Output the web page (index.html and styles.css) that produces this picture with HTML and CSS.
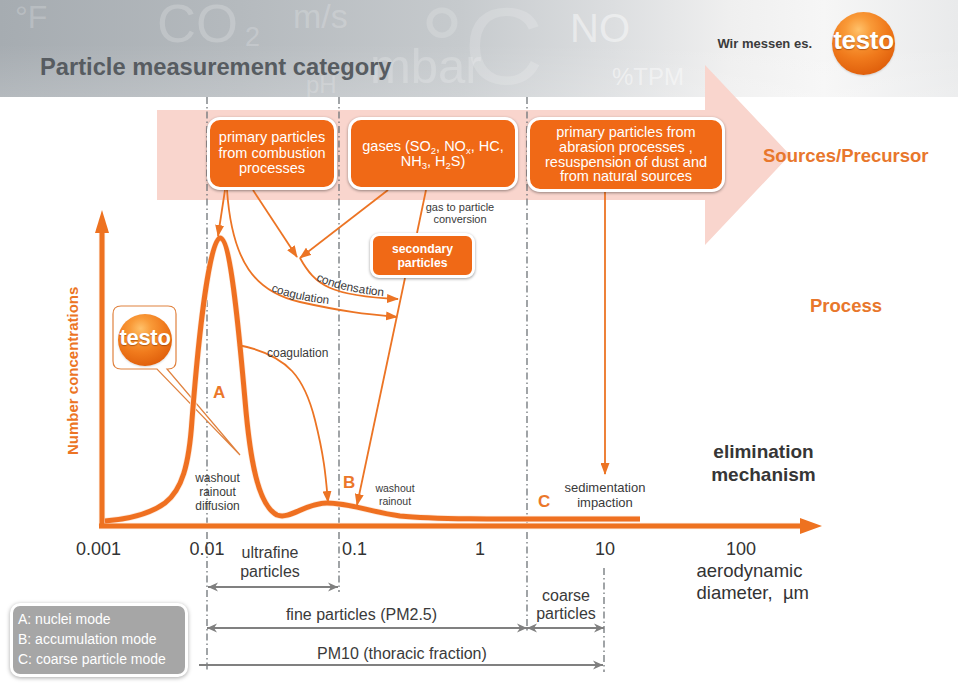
FILE: index.html
```html
<!DOCTYPE html>
<html lang="en">
<head>
<meta charset="utf-8">
<title>Particle measurement category</title>
<link rel="stylesheet" href="styles.css">
</head>
<body>
<div class="slide">
  <header class="hdr">
    <span class="wm wm-f" aria-hidden="true">°F</span>
    <span class="wm wm-co" aria-hidden="true">CO</span>
    <span class="wm wm-2" aria-hidden="true">2</span>
    <span class="wm wm-ms" aria-hidden="true">m/s</span>
    <span class="wm wm-mbar" aria-hidden="true">mbar</span>
    <span class="wm wm-c" aria-hidden="true">°C</span>
    <span class="wm wm-no" aria-hidden="true">NO</span>
    <span class="wm wm-ph" aria-hidden="true">pH</span>
    <span class="wm wm-tpm" aria-hidden="true">%TPM</span>
    <h1 class="title">Particle measurement category</h1>
    <div class="brand">
      <span class="slogan">Wir messen es.</span>
      <div class="ball">testo</div>
    </div>
  </header>

  <div class="canvas">
    <svg class="art" viewBox="0 0 958 687" width="958" height="687">
      <defs>
        <marker id="oa" viewBox="0 0 12 9" refX="11" refY="4.5" markerWidth="12" markerHeight="9" markerUnits="userSpaceOnUse" orient="auto">
          <path d="M0,0 L12,4.5 L0,9 Z" fill="#ec7424"/>
        </marker>
        <marker id="ga" viewBox="0 0 10 10" refX="10" refY="5" markerWidth="10" markerHeight="10" markerUnits="userSpaceOnUse" orient="auto-start-reverse">
          <path d="M0,0.5 L10,5 L0,9.5 L3,5 Z" fill="#7f7f7f"/>
        </marker>
        <path id="tp-cond" d="M316,280 Q338,292 392,297"/>
        <path id="tp-coag" d="M271,291 Q300,302 338,305"/>
      </defs>

      <path class="pink" d="M157,110 H705 V65 L790,155 L705,245 V200 H157 Z"/>

      <g class="dd">
        <line x1="207" y1="97" x2="207" y2="672"/>
        <line x1="339" y1="97" x2="339" y2="592"/>
        <line x1="527" y1="97" x2="527" y2="633"/>
        <line x1="604" y1="568" x2="604" y2="672"/>
      </g>

      <path class="bubble" d="M121,306 H168 Q176,306 176,314 V361 Q176,369 168,369 H167 L240,455 L157,369 H121 Q113,369 113,361 V314 Q113,306 121,306 Z"/>

      <g class="halo">
        <path d="M102,526 V228"/>
        <path d="M99,526 H802"/>
        <path d="M105,521 C130,519 150,514 165,503 C182,490 189,465 192,420 C199,330 210,238 220,238 C230,238 238,320 245,400 C250,460 258,505 277,515 C290,520 305,503 327,503 C350,503 370,512 400,516 C440,520 520,519 640,519"/>
      </g>
      <g class="axis">
        <path d="M102,526 V228"/>
        <path d="M99,526 H802"/>
      </g>
      <polygon class="axhead" points="102,210 95,233 109,233"/>
      <polygon class="axhead" points="822,526 800,518 800,534"/>
      <path class="curve" d="M105,521 C130,519 150,514 165,503 C182,490 189,465 192,420 C199,330 210,238 220,238 C230,238 238,320 245,400 C250,460 258,505 277,515 C290,520 305,503 327,503 C350,503 370,512 400,516 C440,520 520,519 640,519"/>

      <g class="pa">
        <path d="M225,190 L218,236"/>
        <path d="M253,190 L297,257"/>
        <path d="M388,190 L300,258"/>
        <path d="M300,258 C315,285 330,296 398,299"/>
        <path d="M227,190 C232,262 255,292 300,302 S365,314 397,317"/>
        <path class="nomark" d="M426,190 L417,233"/>
        <path d="M405,278 L357,505"/>
        <path d="M238,345 C290,355 305,380 315,420 S326,480 328,502"/>
        <path d="M605,192 L605,474"/>
      </g>

      <g class="dim">
        <path class="both" d="M208,587 H338"/>
        <path class="both" d="M207,628 H527"/>
        <path class="both" d="M527,628 H604"/>
        <path class="end" d="M199,665 H603"/>
      </g>

      <text class="t-side" x="763" y="161.5">Sources/Precursor</text>
      <text class="t-side" x="810" y="311.5">Process</text>
      <text class="t-yaxis" transform="translate(78,455) rotate(-90)">Number concentrations</text>

      <text class="t-mode" x="213" y="398">A</text>
      <text class="t-mode" x="343" y="488">B</text>
      <text class="t-mode" x="538" y="507">C</text>

      <text class="t-proc t-12 mid" x="217.5" y="482">washout</text>
      <text class="t-proc t-12 mid" x="217.5" y="496">rainout</text>
      <text class="t-proc t-12 mid" x="217.5" y="509.5">diffusion</text>

      <text class="t-proc t-105 mid" x="395" y="491.5">washout</text>
      <text class="t-proc t-105 mid" x="395" y="505">rainout</text>

      <text class="t-proc t-13 mid" x="605" y="492">sedimentation</text>
      <text class="t-proc t-13 mid" x="605" y="507">impaction</text>

      <text class="t-elim mid" x="763.5" y="458">elimination</text>
      <text class="t-elim mid" x="763.5" y="481">mechanism</text>

      <text class="t-proc t-11 mid" x="460" y="211">gas to particle</text>
      <text class="t-proc t-11 mid" x="460" y="223.3">conversion</text>

      <text class="t-proc t-12" x="267" y="357">coagulation</text>
      <text class="t-proc t-curv"><textPath href="#tp-cond">condensation</textPath></text>
      <text class="t-proc t-curv2"><textPath href="#tp-coag">coagulation</textPath></text>

      <text class="t-tick mid" x="98.5" y="555">0.001</text>
      <text class="t-tick mid" x="207" y="555">0.01</text>
      <text class="t-tick" x="342" y="555">0.1</text>
      <text class="t-tick mid" x="480" y="555">1</text>
      <text class="t-tick mid" x="605" y="555">10</text>
      <text class="t-tick mid" x="741" y="555">100</text>
      <text class="t-unit" x="696.5" y="577">aerodynamic</text>
      <text class="t-unit" x="696.5" y="599">diameter,  µm</text>

      <text class="t-size mid" x="270" y="557.7">ultrafine</text>
      <text class="t-size mid" x="270" y="576.7">particles</text>
      <text class="t-size mid" x="361.5" y="620">fine particles (PM2.5)</text>
      <text class="t-size mid" x="566" y="601">coarse</text>
      <text class="t-size mid" x="566" y="619">particles</text>
      <text class="t-size" x="317" y="659">PM10 (thoracic fraction)</text>
    </svg>

    <div class="node n1"><span>primary particles<br>from combustion<br>processes</span></div>
    <div class="node n2"><span>gases (SO<sub>2</sub>, NO<sub>x</sub>, HC,<br>NH<sub>3</sub>, H<sub>2</sub>S)</span></div>
    <div class="node n3"><span>primary particles from<br>abrasion processes ,<br>resuspension of dust and<br>from natural sources</span></div>
    <div class="node n4"><span>secondary<br>particles</span></div>

    <div class="ball ball-sm">testo</div>

    <div class="legend">
      <div>A: nuclei mode</div>
      <div>B: accumulation mode</div>
      <div>C: coarse particle mode</div>
    </div>
  </div>
</div>
</body>
</html>
```

FILE: styles.css
```css
* { box-sizing: border-box; }

html, body {
  margin: 0;
  padding: 0;
  background: #ffffff;
}

body {
  font-family: "Liberation Sans", Arial, sans-serif;
}

.slide {
  position: relative;
  width: 958px;
  height: 687px;
  overflow: hidden;
  background: #ffffff;
}

/* ---------- header ---------- */
.hdr {
  position: relative;
  height: 97px;
  display: flex;
  justify-content: space-between;
  align-items: flex-start;
  padding: 0 63px 0 40px;
  overflow: hidden;
  background:
    linear-gradient(180deg, rgba(255,255,255,0) 45%, rgba(255,255,255,0.16) 100%),
    linear-gradient(90deg, #a6acb1 0%, #b5babe 25%, #c6cacd 48%, #dcdee0 64%, #efefef 76%, #f6f6f6 86%, #e9eaeb 100%);
}

.wm {
  position: absolute;
  color: rgba(255, 255, 255, 0.2);
  line-height: 1;
  white-space: nowrap;
  font-family: "Liberation Sans", Arial, sans-serif;
}
.wm-f    { left: 15px;  top: 1px;   font-size: 32px; }
.wm-co   { left: 157px; top: -4px;  font-size: 54px; }
.wm-2    { left: 245px; top: 24px;  font-size: 27px; }
.wm-ms   { left: 293px; top: -1px;  font-size: 34px; }
.wm-mbar { left: 370px; top: 42px;  font-size: 49px; }
.wm-c    { left: 420px; top: -9px;  font-size: 110px; color: rgba(255,255,255,0.17); }
.wm-no   { left: 570px; top: 8px;   font-size: 40px; color: rgba(255,255,255,0.45); }
.wm-ph   { left: 306px; top: 73px;  font-size: 24px; }
.wm-tpm  { left: 612px; top: 65px;  font-size: 24px; color: rgba(255,255,255,0.45); }

.title {
  position: relative;
  margin: 53px 0 0;
  font-size: 23.7px;
  line-height: 28px;
  font-weight: bold;
  color: #575c61;
}

.brand {
  position: relative;
  display: flex;
  align-items: center;
  gap: 20px;
  margin-top: 12px;
}

.slogan {
  font-size: 13px;
  line-height: 15px;
  font-weight: bold;
  color: #3b3b3b;
}

.ball {
  width: 63px;
  height: 63px;
  border-radius: 50%;
  display: flex;
  align-items: center;
  justify-content: center;
  padding-bottom: 7px;
  background: radial-gradient(circle at 42% 28%, #ffc16a 0%, #f99a38 22%, #f07a1c 50%, #e0600c 78%, #c24c08 100%);
  color: #ffffff;
  font-size: 26px;
  font-weight: bold;
  letter-spacing: -0.3px;
  text-shadow: 0 1px 1px rgba(130, 50, 0, 0.55);
  box-shadow: 0 1px 2px rgba(0,0,0,0.15);
}

/* ---------- diagram canvas ---------- */
.canvas {
  position: absolute;
  left: 0;
  top: 0;
  width: 958px;
  height: 687px;
}

.art {
  position: absolute;
  left: 0;
  top: 0;
  font-family: "Liberation Sans", Arial, sans-serif;
}

.pink { fill: #f9d5cd; }

.dd line {
  stroke: #6f7478;
  stroke-width: 1.3;
  stroke-dasharray: 7 3 1.5 3;
}

.bubble {
  fill: #ffffff;
  stroke: #e0823f;
  stroke-width: 1.2;
}

.halo path {
  fill: none;
  stroke: #fde9dc;
  stroke-width: 6.5;
}

.axis path {
  fill: none;
  stroke: #ee7220;
  stroke-width: 5;
}

.axhead { fill: #ee7220; }

.curve {
  fill: none;
  stroke: #ef7021;
  stroke-width: 5;
  stroke-linejoin: round;
}

.pa path {
  fill: none;
  stroke: #ec7424;
  stroke-width: 1.8;
  marker-end: url(#oa);
}
.pa path.nomark { marker-end: none; }

.dim path {
  fill: none;
  stroke: #808080;
  stroke-width: 2;
}
.dim path.both { marker-start: url(#ga); marker-end: url(#ga); }
.dim path.end { marker-end: url(#ga); }

.mid { text-anchor: middle; }

.t-side {
  font-size: 18.5px;
  font-weight: bold;
  fill: #e8772c;
}

.t-yaxis {
  font-size: 15px;
  font-weight: bold;
  fill: #ec7424;
}

.t-mode {
  font-size: 17px;
  font-weight: bold;
  fill: #eb772a;
}

.t-proc { fill: #3a3a3a; }
.t-105 { font-size: 10.5px; }
.t-11 { font-size: 11px; }
.t-12 { font-size: 12px; }
.t-13 { font-size: 13px; }
.t-curv { font-size: 11.8px; }
.t-curv2 { font-size: 11.6px; }

.t-elim {
  font-size: 19px;
  font-weight: bold;
  fill: #363636;
}

.t-tick {
  font-size: 18px;
  fill: #333333;
}

.t-unit {
  font-size: 18.5px;
  fill: #333333;
  white-space: pre;
}

.t-size {
  font-size: 16px;
  fill: #3a3a3a;
}

/* ---------- source boxes ---------- */
.node {
  position: absolute;
  display: flex;
  align-items: center;
  justify-content: center;
  text-align: center;
  background: #f06916;
  color: #ffffff;
  border: 3px solid #ffffff;
  border-radius: 13px;
  box-shadow: 0 1px 3px rgba(0, 0, 0, 0.4);
  font-size: 14.5px;
  line-height: 15.5px;
}

.n1 { left: 207px; top: 117px; width: 130px; height: 73px; }
.n2 { left: 348px; top: 117px; width: 170px; height: 73px; line-height: 15px; }
.n3 { left: 527px; top: 117px; width: 198px; height: 75px; line-height: 14.7px; }
.n4 {
  left: 370px; top: 233px; width: 105px; height: 45px;
  font-size: 12.2px; font-weight: bold; line-height: 14px;
  border-radius: 9px;
}

.n2 sub {
  font-size: 9.5px;
  line-height: 0;
  vertical-align: -3px;
}

.ball-sm {
  position: absolute;
  left: 118px;
  top: 314px;
  width: 54px;
  height: 52px;
  font-size: 22px;
  padding-bottom: 5px;
}

/* ---------- legend ---------- */
.legend {
  position: absolute;
  left: 10px;
  top: 603px;
  width: 178px;
  height: 74px;
  padding: 3px 0 0 5px;
  background: #a6a6a6;
  border: 3px solid #ffffff;
  border-radius: 10px;
  box-shadow: 0 1px 4px rgba(0, 0, 0, 0.35);
  color: #ffffff;
  font-size: 14px;
  line-height: 20px;
}
```
